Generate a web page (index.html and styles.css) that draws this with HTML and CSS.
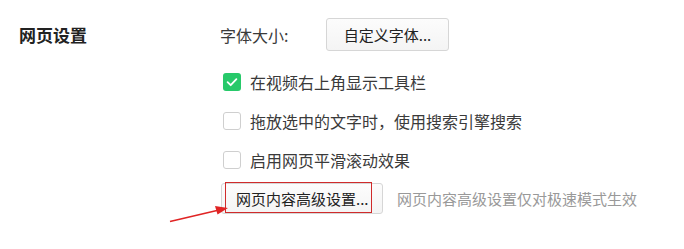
FILE: index.html
```html
<!DOCTYPE html>
<html>
<head>
<meta charset="utf-8">
<link rel="stylesheet" href="styles.css">
</head>
<body>
<div class="page">
  <section class="settings">
    <h2 class="section-title">网页设置</h2>
    <div class="section-body">
      <div class="font-row">
        <span class="font-label">字体大小:</span>
        <button class="btn btn-font">自定义字体...</button>
      </div>
      <label class="check-row">
        <span class="box checked">
          <svg viewBox="0 0 18 18" width="18" height="18"><path d="M4.6 9.2 L7.7 12.2 L13.4 6.1" fill="none" stroke="#fff" stroke-width="1.8" stroke-linecap="round" stroke-linejoin="round"/></svg>
        </span>
        <span class="check-text">在视频右上角显示工具栏</span>
      </label>
      <label class="check-row">
        <span class="box"></span>
        <span class="check-text">拖放选中的文字时，使用搜索引擎搜索</span>
      </label>
      <label class="check-row">
        <span class="box"></span>
        <span class="check-text">启用网页平滑滚动效果</span>
      </label>
      <div class="adv-row">
        <div class="btn-wrap">
          <button class="btn btn-adv">网页内容高级设置...</button>
          <span class="highlight"></span>
        </div>
        <span class="hint">网页内容高级设置仅对极速模式生效</span>
      </div>
    </div>
  </section>
  <svg class="arrow" width="684" height="249" viewBox="0 0 684 249">
    <line x1="170" y1="221.5" x2="218" y2="210.3" stroke="#e02424" stroke-width="1.6"/>
    <polygon points="228,208 215,206 217.5,214.5" fill="#e02424"/>
  </svg>
</div>
</body>
</html>
```

FILE: styles.css
```css
html, body {
  margin: 0;
  padding: 0;
  background: #ffffff;
}
body {
  font-family: "Noto Sans CJK SC", "Noto Sans", sans-serif;
  color: #3a3a3a;
}
.page {
  position: relative;
  width: 684px;
  height: 249px;
  overflow: hidden;
}
.settings {
  display: flex;
  padding-top: 18px;
}
.section-title {
  margin: 0;
  width: 220px;
  flex: none;
  padding-left: 19px;
  box-sizing: border-box;
  font-size: 17px;
  font-weight: bold;
  color: #222;
  line-height: 33px;
  height: 33px;
}
.section-body {
  display: flex;
  flex-direction: column;
}
.font-row {
  display: flex;
  align-items: center;
  height: 33px;
}
.font-label {
  width: 106px;
  font-size: 16px;
  color: #3a3a3a;
}
.btn {
  font-family: "Noto Sans CJK SC", "Noto Sans", sans-serif;
  font-size: 15px;
  color: #222;
  background: linear-gradient(#fcfcfc, #f4f4f4);
  border: 1px solid #d6d6d6;
  border-radius: 3px;
  padding: 0;
  margin: 0;
  box-sizing: border-box;
}
.btn-font {
  width: 123px;
  height: 33px;
}
.check-row {
  display: flex;
  align-items: center;
  height: 18px;
  margin-left: 3px;
  margin-top: 21px;
}
.font-row + .check-row {
  margin-top: 22px;
}
.box {
  width: 18px;
  height: 18px;
  box-sizing: border-box;
  border: 1.5px solid #cfcfcf;
  border-radius: 3px;
  background: #fff;
  flex: none;
}
.box.checked {
  border: none;
  background: #27c96a;
}
.box svg {
  display: block;
}
.check-text {
  margin-left: 9px;
  font-size: 16px;
  color: #3a3a3a;
  line-height: 18px;
}
.adv-row {
  display: flex;
  align-items: center;
  margin-top: 14px;
  margin-left: 1px;
}
.btn-wrap {
  position: relative;
}
.btn-adv {
  display: block;
  width: 162px;
  height: 31px;
  text-align: left;
  padding-left: 14px;
}
.highlight {
  position: absolute;
  left: 4px;
  top: -1px;
  width: 147px;
  height: 31px;
  box-sizing: border-box;
  border: 1.5px solid #d02b2b;
}
.hint {
  margin-left: 14px;
  font-size: 15px;
  color: #999;
}
.arrow {
  position: absolute;
  left: 0;
  top: 0;
  pointer-events: none;
}
```
